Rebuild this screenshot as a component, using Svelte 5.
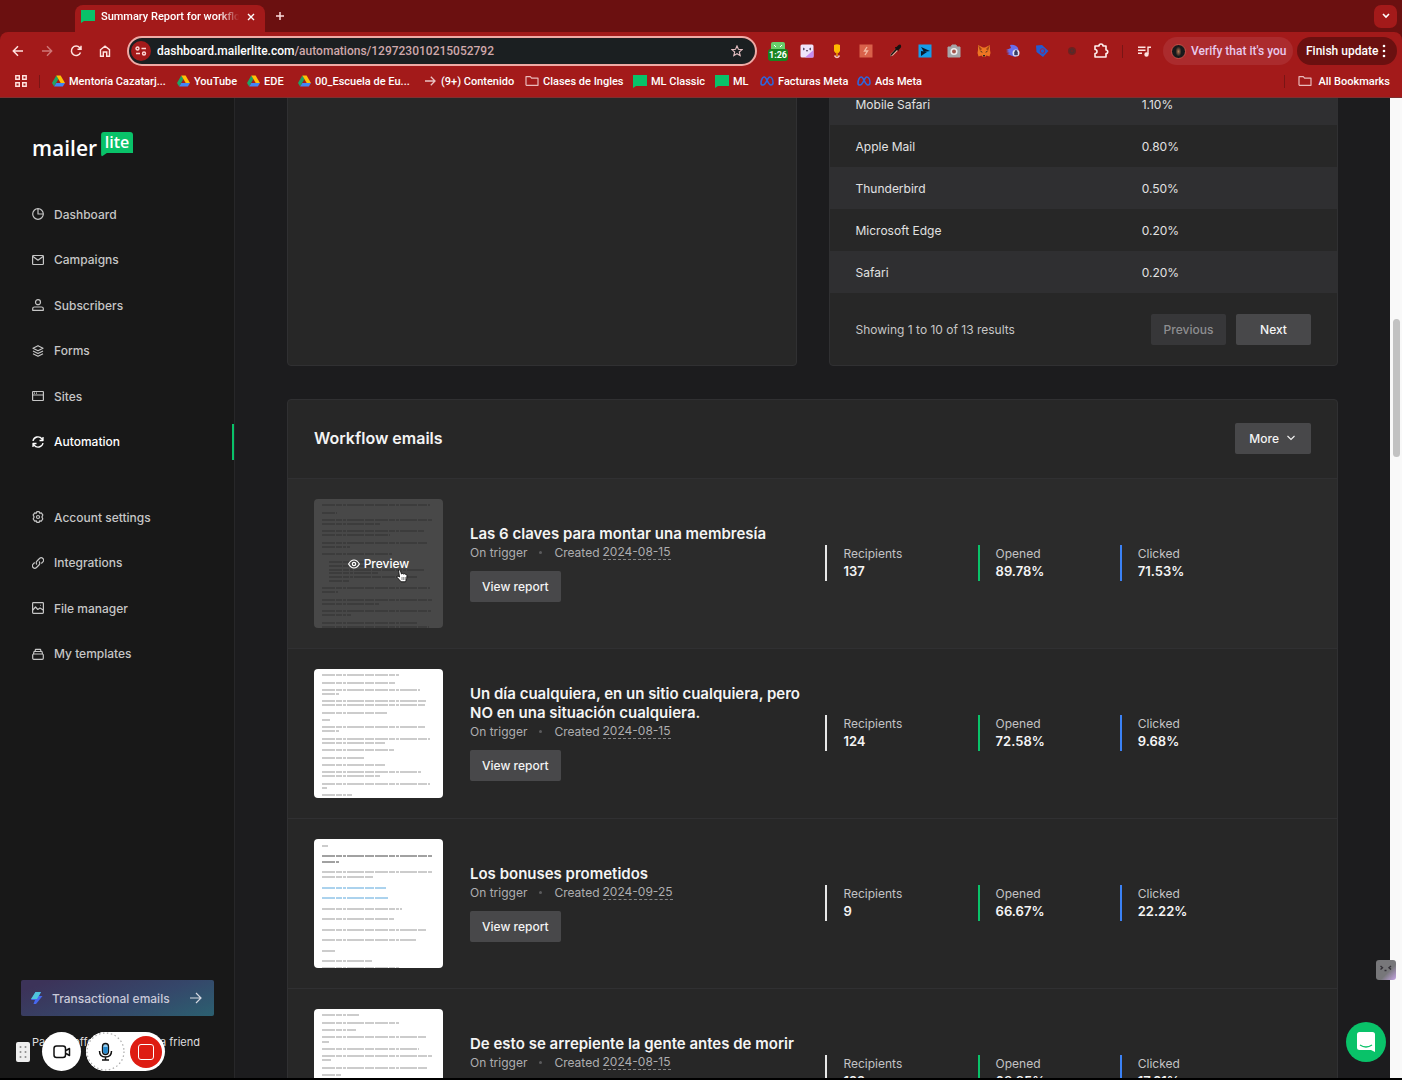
<script>
    const bookmarks = [
        { label: 'Mentoría Cazatarj...', icon: 'drive', width: 107 },
        { label: 'YouTube', icon: 'drive', width: 52 },
        { label: 'EDE', icon: 'drive', width: 33 },
        { label: '00_Escuela de Eu...', icon: 'drive', width: 108 },
        { label: '(9+) Contenido', icon: 'arrow', width: 83 },
        { label: 'Clases de Ingles', icon: 'folder', width: 90 },
        { label: 'ML Classic', icon: 'ml', width: 64 },
        { label: 'ML', icon: 'ml', width: 27 },
        { label: 'Facturas Meta', icon: 'meta', width: 79 },
        { label: 'Ads Meta', icon: 'meta', width: 62 }
    ];

    const extensions = ['timer', 'kawaii', 'spoon', 'bolt', 'dropper', 'play', 'camera', 'fox', 'sonic', 'tag', 'dot', 'puzzle'];

    const mainNav = ['Dashboard', 'Campaigns', 'Subscribers', 'Forms', 'Sites', 'Automation'];
    const moreNav = ['Account settings', 'Integrations', 'File manager', 'My templates'];

    const clients = [
        { name: 'Mobile Safari', share: '1.10%' },
        { name: 'Apple Mail', share: '0.80%' },
        { name: 'Thunderbird', share: '0.50%' },
        { name: 'Microsoft Edge', share: '0.20%' },
        { name: 'Safari', share: '0.20%' }
    ];

    // lines: [y, length, kind] of the email thumbnail
    const emails = [
        {
            title: 'Las 6 claves para montar una membresía',
            created: '2024-08-15',
            recipients: '137', opened: '89.78%', clicked: '71.53%',
            hovered: true,
            lines: [[5, 108], [13, 15], [20, 110], [24, 58], [31, 102], [35, 68], [43, 105], [47, 28], [54, 70], [62, 50, 'item'], [66, 60, 'item'], [70, 103, 'item'], [73, 56, 'item'], [77, 95, 'item'], [81, 28, 'item'], [88, 108], [92, 16], [100, 110], [104, 57], [111, 109], [115, 29], [123, 96], [127, 107]]
        },
        {
            title: 'Un día cualquiera, en un sitio cualquiera, pero NO en una situación cualquiera.',
            created: '2024-08-15',
            recipients: '124', opened: '72.58%', clicked: '9.68%',
            lines: [[5, 78], [13, 74], [20, 98], [24, 17], [31, 104], [35, 103], [43, 65], [50, 8], [57, 103], [61, 17], [69, 108], [73, 63], [80, 72], [88, 42], [95, 63], [102, 99], [106, 58], [114, 108], [118, 5], [125, 30]]
        },
        {
            title: 'Los bonuses prometidos',
            created: '2024-09-25',
            recipients: '9', opened: '66.67%', clicked: '22.22%',
            lines: [[6, 6], [16, 110, 'bold'], [22, 17, 'bold'], [32, 110], [37, 51], [48, 64, 'link'], [58, 67, 'link'], [69, 80], [79, 72], [90, 104], [100, 94], [111, 13], [121, 50], [128, 78]]
        },
        {
            title: 'De esto se arrepiente la gente antes de morir',
            created: '2024-08-15',
            recipients: '122', opened: '68.85%', clicked: '17.21%',
            lines: [[5, 37], [13, 78], [20, 34], [27, 104], [32, 7], [39, 97], [46, 110], [50, 9], [58, 106], [65, 19], [73, 98], [80, 60], [88, 104], [96, 40]]
        }
    ];
</script>

{#snippet bookmarkIcon(name)}
    {#if name === 'drive'}
        <svg width="13" height="12" viewBox="0 0 13 12">
            <path d="M4.3 0.5 0 8l2.1 3.5L6.5 4z" fill="#1fa463" />
            <path d="M4.3 0.5h4.3L13 8H8.7z" fill="#ffc107" />
            <path d="M2.1 11.5 4.3 8H13l-2.2 3.5z" fill="#4285f4" />
        </svg>
    {:else if name === 'arrow'}
        <svg width="13" height="12" viewBox="0 0 13 12" fill="none" stroke="#eac4c4" stroke-width="1.3">
            <path d="M1 6h10M6.8 1.8 11 6l-4.2 4.2" />
        </svg>
    {:else if name === 'folder'}
        <svg width="14" height="12" viewBox="0 0 14 12" fill="none" stroke="#e9baba" stroke-width="1.2">
            <path d="M1 9.8V1.7h4.3l1.3 1.5H13v7.1H1.5z" stroke-linejoin="round" />
        </svg>
    {:else if name === 'ml'}
        <svg width="14" height="13" viewBox="0 0 14 13"><path d="M0 0h14v11H3l-3 2z" fill="#09c269" /></svg>
    {:else}
        <svg width="14" height="10" viewBox="0 0 14 10" fill="none" stroke="#2f66dc" stroke-width="1.6">
            <path d="M1 7.4C1 4 2.5 1 4.3 1 6.6 1 8 9 10.8 9 12.5 9 13 8 13 6.8 13 3.5 11.5 1 9.7 1 7.5 1 6 9 3 9 1.7 9 1 8.5 1 7.4z" />
        </svg>
    {/if}
{/snippet}

{#snippet extensionIcon(name)}
    <svg width="20" height="20" viewBox="0 0 20 20">
        {#if name === 'timer'}
            <rect x="3" y="1" width="14" height="9" rx="2" fill="#69ce6b" />
            <path d="m6 4 2 2m6-2-2 2" stroke="#fff" />
            <rect x="0" y="8" width="20" height="12" rx="3" fill="#18841f" />
            <text x="10" y="17" text-anchor="middle" class="timer-text">1:26</text>
        {:else if name === 'kawaii'}
            <rect x="3.5" y="3.5" width="13" height="13" rx="1.5" fill="#eee3fa" />
            <path d="M16.5 9v7.5H8z" fill="#c68cf0" />
            <path d="m6 7 1.5 1L6 9m8-2-1.5 1L14 9M9 9.5q1 1 2 0" fill="none" stroke="#41304d" stroke-width="1" />
        {:else if name === 'spoon'}
            <path d="M7 4q3-1.500 6 0V10l-1.500 2h-3L7 10z" fill="#ffb800" />
            <path d="M10 11v4" stroke="#f4a300" stroke-width="1.5" />
            <path d="M7.5 14.5q2.500 4 5 0" fill="none" stroke="#f3c3bb" stroke-width="1.5" />
        {:else if name === 'bolt'}
            <rect x="3.5" y="3.5" width="13" height="13" fill="#d9614a" />
            <path d="m11 6-2.500 4h3l-2.500 4" fill="none" stroke="#f3b8a2" stroke-width="1.4" />
        {:else if name === 'dropper'}
            <path d="m5 15.5 1-3 5-5 2 2-5 5z" fill="#f0b7a5" />
            <path d="m10 6 1.5 0 2-2q2-1 2.5.5t-.5 2.5l-2 2v1.5L12 9l-5 5-2 2 1-3 4.5-5z" fill="#16110f" />
        {:else if name === 'play'}
            <rect x="3.5" y="3.5" width="13" height="13" fill="#159de9" />
            <path d="m6 6 9 4-6 1zM6 10l6 1-6 4z" fill="#091a2c" />
        {:else if name === 'camera'}
            <path d="M4 6h3l1-2h4l1 2h3v10H4z" fill="#a5a5a8" stroke="#a5a5a8" stroke-linejoin="round" />
            <circle cx="10" cy="10.5" r="3.5" fill="#eee" />
            <circle cx="10" cy="10.5" r="2" fill="#a4554c" />
        {:else if name === 'fox'}
            <path d="m4 4 5 2.500h2L16 4l0 5 .5 3-1 3.500-3-1L11 16H9l-1.500-1.500-3 1-1-3.500.5-3z" fill="#ee7623" />
            <path d="m4 4 4 4-2 2zm12 0-4 4 2 2z" fill="#a34515" />
            <path d="m6 10 2 .5.5 1.500zm8 0-2 .5-.5 1.500zM9 14h2v1.500H9z" fill="#282323" />
        {:else if name === 'sonic'}
            <path d="M3 9 8 7 7 4q5-1 8 3l1 5-4 4-8-3 3-1-4-1 3-1z" fill="#696eea" />
            <circle cx="13" cy="12" r="3.5" fill="#e2e5f6" />
            <path d="M11.500 11h3v3h-3zM12 11v-1.500h2V11" fill="#383d63" stroke="#383d63" stroke-width=".5" />
        {:else if name === 'tag'}
            <path d="M4 4.500 10 4l6.500 6-5.500 6-6.500-5z" fill="#235bd2" />
            <circle cx="10.5" cy="10" r="2.3" fill="none" stroke="#a9213f" />
        {:else if name === 'dot'}
            <circle cx="10" cy="10" r="4" fill="#6e2220" />
            <circle cx="10" cy="10" r="2" fill="none" stroke="#4b3030" />
        {:else}
            <path d="M4 5h4a2 2 0 0 1 4 0h3v4a1.7 1.7 0 0 1 0 3.500V16H4v-3.500a2 2 0 0 0 0-4z" fill="none" stroke="#fff0ee" stroke-width="1.6" stroke-linejoin="round" />
        {/if}
    </svg>
{/snippet}

{#snippet navIcon(name)}
    <svg width="12" height="12" viewBox="0 0 12 12" fill="none" stroke="currentColor" stroke-width="1.2" stroke-linejoin="round">
        {#if name === 'Dashboard'}
            <circle cx="6" cy="6" r="5.3" /><path d="M6 .7V6h5.300" />
        {:else if name === 'Campaigns'}
            <rect x=".6" y="1.5" width="10.8" height="9" rx=".8" /><path d="m1 2.500 5 3.700 5-3.700" />
        {:else if name === 'Subscribers'}
            <circle cx="6" cy="3.2" r="2.5" /><path d="M.7 11.300V9.500Q.7 8 2.500 8h7q1.800 0 1.800 1.500v1.800z" />
        {:else if name === 'Forms'}
            <path d="m6 .7 5 2.500-5 2.500-5-2.500zM1 6l5 2.500L11 6M1 8.700l5 2.500 5-2.500" />
        {:else if name === 'Sites'}
            <rect x=".6" y="1.5" width="10.8" height="9" rx=".5" /><path d="M.6 5h10.800M2 3.200h1M4 3.200h1" />
        {:else if name === 'Automation'}
            <path d="M1 5a5 5 0 0 1 9-2l1 1.500M11 1v3.500H7.500M11 7a5 5 0 0 1-9 2L1 7.500M1 11V7.500h3.500" stroke-width="1.3" />
        {:else if name === 'Account settings'}
            <path d="M4.800.7h2.400l.5 1.500 1.600-.3 1.500 2L9.900 6l.9 2-1.500 2.100-1.600-.3-.5 1.500H4.800l-.5-1.500-1.600.3L1.200 8l.9-2-.9-2.100 1.500-2 1.600.3z" /><circle cx="6" cy="6" r="1.5" />
        {:else if name === 'Integrations'}
            <path d="M5 7.500a2.400 2.400 0 0 1 0-3.500L7.500 1.500a2.400 2.400 0 0 1 3.400 3.400L9.300 6.500M7 4.500A2.400 2.400 0 0 1 7 8l-2.500 2.500a2.400 2.400 0 0 1-3.400-3.400l1.600-1.600" />
        {:else if name === 'File manager'}
            <rect x=".6" y=".6" width="10.8" height="10.8" rx=".8" /><path d="m.8 8 2.700-3 2.300 2.500L8 6l3.200 2M8 3.300h.6" />
        {:else}
            <rect x=".7" y="6" width="10.6" height="5.3" rx="1" /><path d="m1.500 6 .5-2.500h8l.5 2.500M3 3.300l.5-2h5l.5 2" />
        {/if}
    </svg>
{/snippet}

<div class="browser">
    <header class="chrome">
        <div class="tab-strip">
            <div class="tab">
                <svg width="14" height="13" viewBox="0 0 14 13"><path d="M0 0h14v11H3l-3 2z" fill="#09c269" /></svg>
                <span class="tab-title">Summary Report for workflow</span>
                <button type="button" class="icon-button small" aria-label="Close tab">
                    <svg width="8" height="8" viewBox="0 0 8 8" stroke="#fff" stroke-width="1.4"><path d="m1 1 6 6M7 1 1 7" /></svg>
                </button>
            </div>
            <button type="button" class="icon-button new-tab" aria-label="New tab">
                <svg width="10" height="10" viewBox="0 0 10 10" stroke="#fbdcdc" stroke-width="1.5"><path d="M5 1v8M1 5h8" /></svg>
            </button>
            <button type="button" class="icon-button tab-search" aria-label="Search tabs">
                <svg width="8" height="6" viewBox="0 0 8 6" fill="none" stroke="#fff" stroke-width="1.6"><path d="m1 1 3 3 3-3" /></svg>
            </button>
        </div>

        <div class="toolbar">
            <div class="nav-buttons">
                <button type="button" class="icon-button" aria-label="Back">
                    <svg width="12" height="12" viewBox="0 0 12 12" fill="none" stroke="#ffe3e0" stroke-width="1.5"><path d="M11 6H1.500M6 1.300 1.300 6 6 10.700" /></svg>
                </button>
                <button type="button" class="icon-button" aria-label="Forward" disabled>
                    <svg width="12" height="12" viewBox="0 0 12 12" fill="none" stroke="#cf7777" stroke-width="1.4"><path d="M1 6h9.500M6 1.300 10.700 6 6 10.700" /></svg>
                </button>
                <button type="button" class="icon-button" aria-label="Reload">
                    <svg width="12" height="12" viewBox="0 0 12 12" fill="none" stroke="#ffe3e0" stroke-width="1.5"><path d="M10.500 7.500a4.700 4.700 0 1 1-.8-4.800L11 4M11 .8V4.300H7.500" /></svg>
                </button>
                <button type="button" class="icon-button" aria-label="Home">
                    <svg width="12" height="12" viewBox="0 0 12 12" fill="none" stroke="#ffe3e0" stroke-width="1.4"><path d="M1.500 4.700 6 1.200l4.500 3.500v6.500H7.700V7H4.300v4.200H1.500z" /></svg>
                </button>
            </div>

            <div class="address">
                <button type="button" class="icon-button site-info" aria-label="Site information">
                    <svg width="12" height="10" viewBox="0 0 12 10" fill="none" stroke="#ffd8d5" stroke-width="1.4"><circle cx="2.5" cy="2.5" r="1.5" /><path d="M6.500 2.500H11M1 7.500h4" /><circle cx="9" cy="7.5" r="1.5" /></svg>
                </button>
                <span class="url">dashboard.mailerlite.com<span class="path">/automations/129723010215052792</span></span>
                <button type="button" class="icon-button" aria-label="Bookmark this tab">
                    <svg width="12" height="12" viewBox="0 0 12 12" fill="none" stroke="#e5bfc2" stroke-width="1.1"><path d="m6 .9 1.400 3.400 3.700.3-2.800 2.400.9 3.600L6 8.700l-3.200 1.900.9-3.600L.9 4.600l3.700-.3z" /></svg>
                </button>
            </div>

            <div class="extensions">
                {#each extensions as name}
                    <button type="button" class="icon-button" aria-label={name}>{@render extensionIcon(name)}</button>
                {/each}
            </div>
            <span class="divider"></span>
            <button type="button" class="icon-button" aria-label="Media controls">
                <svg width="13" height="11" viewBox="0 0 13 11" fill="none" stroke="#ffe3e0" stroke-width="1.4"><path d="M0 1.200h7.500M0 4.200h7.500M0 7.200h4M10 8V1.200h3" /><circle cx="8.5" cy="8.5" r="1.5" fill="#ffe3e0" /></svg>
            </button>
            <button type="button" class="verify"><span class="avatar"></span>Verify that it's you</button>
            <button type="button" class="finish">Finish update
                <svg width="4" height="14" viewBox="0 0 4 14" fill="#fff"><circle cx="2" cy="2" r="1.3" /><circle cx="2" cy="7" r="1.3" /><circle cx="2" cy="12" r="1.3" /></svg>
            </button>
        </div>

        <nav class="bookmarks">
            <button type="button" class="icon-button small" aria-label="Apps">
                <svg width="12" height="12" viewBox="0 0 12 12" fill="none" stroke="#ffe3e0" stroke-width="1.4"><path d="M.8.8h3.500v3.500H.8zM7.700.8h3.500v3.500H7.700zM.8 7.700h3.500v3.500H.8zM7.700 7.700h3.500v3.500H7.700z" /></svg>
            </button>
            <span class="divider"></span>
            {#each bookmarks as bookmark}
                <a href="#bookmark" style:width="{bookmark.width}px">{@render bookmarkIcon(bookmark.icon)}{bookmark.label}</a>
            {/each}
            <span class="divider last"></span>
            <a href="#all">{@render bookmarkIcon('folder')}All Bookmarks</a>
        </nav>
    </header>

    <div class="page">
        <aside class="sidebar">
            <a href="#home" class="logo" aria-label="MailerLite">
                <span class="mailer">mailer</span>
                <span class="lite">lite</span>
            </a>
            <nav class="menu">
                {#each mainNav as item}
                    <a href="#{item}" class:active={item === 'Automation'}>{@render navIcon(item)}{item}</a>
                {/each}
            </nav>
            <nav class="menu secondary">
                {#each moreNav as item}
                    <a href="#{item}">{@render navIcon(item)}{item}</a>
                {/each}
            </nav>
            <div class="sidebar-bottom">
                <a href="#transactional" class="transactional">
                    <svg width="12" height="12" viewBox="0 0 12 12"><path d="M4.500 0H10L8 4h3.500L5 12H2.500L4 8H0z" fill="#4668f0" /><path d="M4.500 0H10L6 7H0z" fill="#4fc4dc" /></svg>
                    <span>Transactional emails</span>
                    <svg width="12" height="12" viewBox="0 0 12 12" fill="none" stroke="#d6d9e2" stroke-width="1.2"><path d="M0 6h11M6 1l5 5-5 5" /></svg>
                </a>
                <div class="small-links">
                    <a href="#partner">Partner offer</a>
                    <a href="#refer">Refer a friend</a>
                </div>
            </div>
        </aside>

        <main>
            <div class="reports">
                <section class="card"></section>
                <section class="card">
                    <table>
                        <tbody>
                            {#each clients as client}
                                <tr>
                                    <td>{client.name}</td>
                                    <td>{client.share}</td>
                                </tr>
                            {/each}
                        </tbody>
                    </table>
                    <div class="pagination">
                        <span>Showing 1 to 10 of 13 results</span>
                        <button type="button" class="button" disabled>Previous</button>
                        <button type="button" class="button">Next</button>
                    </div>
                </section>
            </div>

            <section class="card workflow">
                <div class="workflow-header">
                    <h2>Workflow emails</h2>
                    <button type="button" class="button more">More
                        <svg width="8" height="6" viewBox="0 0 8 6" fill="none" stroke="currentColor" stroke-width="1.1"><path d="m.5 1 3.500 3.500L7.500 1" /></svg>
                    </button>
                </div>
                {#each emails as email}
                    <article class="email" class:hovered={email.hovered}>
                        <div class="thumb">
                            <svg width="129" height="129" viewBox="0 0 129 129">
                                {#each email.lines as [y, length, kind]}
                                    <line class={kind} x1={kind === 'item' ? 15 : 8} x2={8 + length} y1={y + 1} y2={y + 1} />
                                {/each}
                            </svg>
                            {#if email.hovered}
                                <button type="button" class="preview">
                                    <svg width="12" height="10" viewBox="0 0 12 10" fill="none" stroke="currentColor" stroke-width="1.2"><path d="M.6 5Q3 1 6 1t5.400 4Q9 9 6 9T.6 5z" /><circle cx="6" cy="5" r="1.7" /></svg>
                                    Preview
                                </button>
                                <svg class="cursor" width="12" height="14" viewBox="0 0 12 14"><path d="M2.500 1Q4 .3 4.500 2L5.500 5q1-1 2 0 1-.7 1.800.3 1.700-.3 1.700 1.500 0 3-1.500 6H5Q3 10 1 8.500.6 7 2 7l1.500 1z" fill="#fff" stroke="#111" stroke-width=".9" /><path d="M6 8v3M7.700 8v3M9.300 8v3" stroke="#333" stroke-width=".6" /></svg>
                            {/if}
                        </div>
                        <div class="details">
                            <h3>{email.title}</h3>
                            <p>On trigger <i></i> Created <span class="date">{email.created}</span></p>
                            <button type="button" class="button">View report</button>
                        </div>
                        <dl>
                            <div><dt>Recipients</dt><dd>{email.recipients}</dd></div>
                            <div class="opened"><dt>Opened</dt><dd>{email.opened}</dd></div>
                            <div class="clicked"><dt>Clicked</dt><dd>{email.clicked}</dd></div>
                        </dl>
                    </article>
                {/each}
            </section>
        </main>
        <div class="scrollbar"><span></span></div>
    </div>

    <!-- Screen recorder controls -->
    <div class="recorder">
        <span class="handle">
            <svg width="8" height="14" viewBox="0 0 8 14" fill="#8c8c8c"><circle cx="1.5" cy="2" r="1" /><circle cx="6.5" cy="2" r="1" /><circle cx="1.5" cy="7" r="1" /><circle cx="6.5" cy="7" r="1" /><circle cx="1.5" cy="12" r="1" /><circle cx="6.5" cy="12" r="1" /></svg>
        </span>
        <button type="button" class="round" aria-label="Camera">
            <svg width="18" height="14" viewBox="0 0 18 14" fill="none" stroke="#111" stroke-width="1.5"><rect x="1" y="1" width="11.5" height="11.5" rx="2.5" /><path d="m13 5.500 3.500-2v7l-3.500-2" stroke-linejoin="round" /></svg>
        </button>
        <div class="pill">
            <button type="button" class="round mic" aria-label="Microphone">
                <svg width="39" height="39" viewBox="0 0 39 39" fill="none">
                    <circle cx="19.5" cy="19.5" r="18.5" stroke="#aaa" stroke-width="1.2" stroke-dasharray="1.5 2.5" />
                    <rect x="16.5" y="11.5" width="6" height="11" rx="3" fill="#8fc9ed" stroke="#111" stroke-width="1.3" />
                    <path d="M17.200 15h4.600v5q-2 3-4.600 0z" fill="#2588cc" />
                    <path d="M13.500 19q0 6 6 6t6-6M19.500 25v3M16 28h7" stroke="#111" stroke-width="1.5" />
                </svg>
            </button>
            <button type="button" class="stop" aria-label="Stop recording"><span></span></button>
        </div>
    </div>

    <span class="assistant">
        <svg width="14" height="8" viewBox="0 0 14 8" fill="none" stroke="#343138" stroke-width="1.4"><path d="m1.500 1 2 1.800-2 1.700M12 1l-2 1.800 2 1.700M5.500 5.500h2" /></svg>
    </span>
    <button type="button" class="chat" aria-label="Open chat">
        <svg width="18" height="20" viewBox="0 0 18 20"><path d="M2.500 0h13Q18 0 18 2.500V20l-4-2H2.500Q0 18 0 15.500v-13Q0 0 2.500 0z" fill="#fff" /><path d="M3 13q6 4 12 0" fill="none" stroke="#09c269" stroke-width="1.3" /></svg>
    </button>
</div>

<style>
    :global(body) {
        margin: 0;
        background: #000;
    }

    .browser {
        position: relative;
        display: flex;
        flex-direction: column;
        height: 100vh;
        box-sizing: border-box;
        border-bottom: 2px solid #000;
        overflow: hidden;
        font-family: Inter, "Liberation Sans", sans-serif;
        font-size: 12px;
        color: #e2e2e2;
    }

    .browser * {
        box-sizing: border-box;
    }

    button {
        font: inherit;
        color: inherit;
        border: 0;
        padding: 0;
        background: none;
    }

    a {
        color: inherit;
        text-decoration: none;
    }

    svg {
        flex: none;
        display: block;
    }

    /* Browser window */
    .chrome {
        flex: none;
        height: 98px;
        background: #6b1010;
        color: #fff;
        font-family: Roboto, "Liberation Sans", sans-serif;
        font-size: 11px;
        font-weight: 500;
        border-bottom: 1px solid #7d3030;
    }

    .tab-strip {
        display: flex;
        align-items: center;
        height: 32px;
        padding: 0 5px 0 75px;
    }

    .tab {
        display: flex;
        align-items: center;
        align-self: flex-end;
        width: 190px;
        height: 27px;
        padding: 0 8px 4px 6px;
        background: #a31a1a;
        border-radius: 8px 8px 0 0;
    }

    .tab-title {
        flex: 1;
        margin-left: 6px;
        overflow: hidden;
        white-space: nowrap;
        mask-image: linear-gradient(to right, #000 82%, transparent 96%);
    }

    .icon-button {
        display: flex;
        flex: none;
        align-items: center;
        justify-content: center;
        width: 24px;
        height: 24px;
    }

    .icon-button.small {
        width: 12px;
    }

    .new-tab {
        margin-left: 3px;
    }

    .tab-search {
        width: 23px;
        height: 23px;
        margin-left: auto;
        border-radius: 7px;
        background: #a31a1a;
    }

    .toolbar {
        display: flex;
        align-items: center;
        height: 38px;
        padding: 0 5px 0 6px;
        background: #a31a1a;
        border-radius: 8px 8px 0 0;
    }

    .nav-buttons {
        display: flex;
        gap: 5px;
    }

    .address {
        flex: 1;
        display: flex;
        align-items: center;
        min-width: 0;
        height: 30px;
        margin: 0 9px 0 10px;
        padding: 0 6px 0 2px;
        border: 2px solid #efaaa5;
        border-radius: 15px;
        background: #1b1f21;
    }

    .site-info {
        width: 20px;
        height: 20px;
        border-radius: 50%;
        background: #a31a1a;
    }

    .url {
        flex: 1;
        margin-left: 6px;
        overflow: hidden;
        white-space: nowrap;
        font-size: 12px;
    }

    .path {
        color: #cfa8ab;
    }

    .extensions {
        display: flex;
        justify-content: space-between;
        width: 347px;
    }

    .timer-text {
        font-size: 9px;
        font-weight: 700;
        fill: #fff;
    }

    .divider {
        width: 1px;
        height: 13px;
        margin: 0 9px;
        background: #7a1515;
    }

    .verify,
    .finish {
        display: flex;
        align-items: center;
        height: 28px;
        border-radius: 14px;
        white-space: nowrap;
        font-size: 12px;
    }

    .verify {
        width: 130px;
        margin: 0 4px 0 7px;
        padding-left: 8px;
        gap: 5px;
        background: #ab2b2d;
        color: #e8c9ec;
    }

    .avatar {
        width: 15px;
        height: 15px;
        border: 1px solid #bf5147;
        border-radius: 50%;
        background: radial-gradient(ellipse 3px 5px, #b77a55, #17191b);
    }

    .finish {
        justify-content: space-between;
        width: 100px;
        padding: 0 11px 0 9px;
        background: #6b1010;
    }

    .bookmarks {
        display: flex;
        align-items: center;
        height: 27px;
        padding: 0 12px 5px 15px;
        background: #a31a1a;
    }

    .bookmarks .divider {
        margin: 0 12px;
    }

    .bookmarks .divider.last {
        margin: 0 13px 0 auto;
    }

    .bookmarks a {
        display: flex;
        align-items: center;
        gap: 4px;
        margin-right: 18px;
        white-space: nowrap;
    }

    .bookmarks a:last-child {
        margin-right: 0;
        gap: 6px;
    }

    /* Application */
    .page {
        flex: 1;
        display: flex;
        min-height: 0;
        background: #1c1c1e;
    }

    .sidebar {
        flex: none;
        display: flex;
        flex-direction: column;
        width: 235px;
        border-right: 1px solid #272729;
        background: #181818;
        color: #c6c6c6;
        font-weight: 500;
    }

    .logo {
        display: flex;
        gap: 4px;
        height: 40px;
        margin: 34px 0 24px 32px;
        color: #fff;
        font-family: "Open Sans", sans-serif;
    }

    .mailer {
        font-size: 21px;
        line-height: 32px;
        font-weight: 600;
    }

    .lite {
        align-self: flex-start;
        width: 32px;
        height: 25px;
        background: #09c269;
        border-radius: 3px;
        clip-path: polygon(0 0, 100% 0, 100% 84%, 18% 84%, 0 100%);
        font-size: 16px;
        line-height: 20px;
        font-weight: 600;
        text-align: center;
    }

    .menu {
        display: flex;
        flex-direction: column;
        justify-content: space-between;
        height: 264px;
    }

    .menu.secondary {
        height: 173px;
        margin-top: 39px;
    }

    .menu a {
        display: flex;
        align-items: center;
        gap: 10px;
        height: 36px;
        padding-left: 32px;
    }

    .menu a.active {
        color: #fff;
        border-right: 2px solid #09c269;
    }

    .sidebar-bottom {
        margin-top: auto;
        padding: 0 20px 28px 21px;
    }

    .transactional {
        display: flex;
        align-items: center;
        gap: 9px;
        height: 36px;
        padding: 0 12px 0 10px;
        border-radius: 2px;
        background: linear-gradient(160deg, #3c3359 10%, #35476a 60%, #2b6070);
        color: #c9c9d8;
    }

    .transactional span {
        flex: 1;
    }

    .small-links {
        display: flex;
        justify-content: space-between;
        margin: 19px 14px 0 11px;
        font-size: 11px;
        line-height: 15px;
        font-weight: 400;
        color: #dedede;
    }

    main {
        flex: 1;
        min-width: 0;
        padding: 0 52px;
        overflow: hidden;
    }

    .card {
        border: 1px solid #303032;
        border-radius: 4px;
        background: #272727;
    }

    .reports {
        display: grid;
        grid-template-columns: 1fr 1fr;
        gap: 32px;
        margin: -16px 0 33px;
    }

    table {
        width: 100%;
        border-collapse: collapse;
    }

    td {
        width: 56%;
        height: 42px;
        padding: 0 0 0 26px;
    }

    td + td {
        width: 44%;
        padding-left: 28px;
    }

    tr:nth-child(odd) {
        background: #2f2f31;
    }

    .pagination {
        display: flex;
        align-items: center;
        gap: 10px;
        height: 72px;
        padding: 0 26px;
        color: #c6c6c6;
    }

    .pagination span {
        flex: 1;
    }

    .pagination .button {
        width: 75px;
        padding: 0;
    }

    .button {
        height: 31px;
        padding: 0 12px;
        border-radius: 2px;
        background: #48484a;
        color: #f4f4f4;
        font-size: 12px;
        font-weight: 500;
    }

    .button:disabled {
        background: #373739;
        color: #8e8e90;
    }

    .workflow-header {
        display: flex;
        align-items: center;
        justify-content: space-between;
        height: 78px;
        padding: 0 26px 2px;
    }

    h2 {
        margin: 0;
        font-size: 16px;
        line-height: 20px;
        font-weight: 600;
        color: #f4f4f4;
    }

    .more {
        display: flex;
        align-items: center;
        gap: 8px;
        padding: 0 16px 0 14px;
    }

    .email {
        display: grid;
        grid-template-columns: 129px minmax(0, 382fr) minmax(0, 485fr);
        align-items: center;
        height: 170px;
        padding: 0 26px;
        border-top: 1px solid #303032;
    }

    .hovered {
        background: #2b2b2b;
    }

    .thumb {
        position: relative;
        height: 129px;
        border-radius: 4px;
        background: #fff;
    }

    .thumb line {
        stroke: #999;
        stroke-width: 1;
        stroke-dasharray: 13 1 6 1 3 1 17 1 9 1;
    }

    .thumb .bold {
        stroke: #444;
    }

    .thumb .link {
        stroke: #58a6dc;
    }

    .hovered .thumb {
        background: #484848;
    }

    .hovered .thumb line {
        stroke: #303030;
    }

    .preview {
        position: absolute;
        inset: 0;
        display: flex;
        align-items: center;
        justify-content: center;
        gap: 4px;
        width: 100%;
        color: #fff;
        font-weight: 500;
    }

    .cursor {
        position: absolute;
        left: 82px;
        top: 70px;
    }

    .details {
        padding: 0 12px 2px 27px;
    }

    h3 {
        margin: 0;
        font-size: 15px;
        line-height: 19px;
        font-weight: 600;
        color: #f4f4f4;
    }

    .details p {
        display: flex;
        align-items: center;
        margin: 0 0 9px;
        line-height: 19px;
        color: #aeaeb0;
    }

    .details i {
        width: 3px;
        height: 3px;
        margin: 0 12px;
        border-radius: 50%;
        background: #5b5b5d;
    }

    .date {
        margin-left: 3px;
        line-height: 14px;
        border-bottom: 1px dashed #858587;
    }

    dl {
        display: grid;
        grid-template-columns: 152fr 142fr 191fr;
        margin: 0;
        padding-bottom: 2px;
    }

    dl div {
        height: 36px;
        padding-left: 16px;
        border-left: 2px solid #e8e8e8;
        line-height: 18px;
    }

    dl .opened {
        border-color: #09c269;
    }

    dl .clicked {
        border-color: #3b82f6;
    }

    dt {
        line-height: 17px;
        color: #c3c3c5;
    }

    dd {
        margin: 0;
        font-size: 13px;
        font-weight: 600;
        color: #f4f4f4;
    }

    .scrollbar {
        flex: none;
        width: 12px;
        padding: 221px 2px 0 3px;
        background: #f9f9f9;
    }

    .scrollbar span {
        display: block;
        height: 138px;
        border-radius: 4px;
        background: #c2c2c2;
    }

    /* Floating over the page */
    .recorder {
        position: absolute;
        left: 16px;
        bottom: 7px;
        display: flex;
        align-items: center;
    }

    .handle {
        display: flex;
        align-items: center;
        justify-content: center;
        width: 14px;
        height: 20px;
        border-radius: 2px;
        background: #eee;
    }

    .round {
        display: flex;
        align-items: center;
        justify-content: center;
        width: 39px;
        height: 39px;
        margin: 0 5px 0 12px;
        border-radius: 50%;
        background: #fff;
    }

    .round.mic {
        margin: 0;
    }

    .pill {
        display: flex;
        align-items: center;
        justify-content: space-between;
        width: 79px;
        padding-right: 3px;
        border-radius: 20px;
        background: #fff;
    }

    .stop {
        display: flex;
        align-items: center;
        justify-content: center;
        width: 32px;
        height: 32px;
        border-radius: 50%;
        background: #de1c12;
    }

    .stop span {
        width: 16px;
        height: 16px;
        border: 1px solid #fff;
        border-radius: 3px;
    }

    .assistant {
        position: absolute;
        right: 6px;
        bottom: 98px;
        display: flex;
        justify-content: center;
        width: 20px;
        height: 20px;
        padding-top: 5px;
        border-radius: 3px;
        background: linear-gradient(135deg, #77777a 60%, #c6a5e6);
    }

    .chat {
        position: absolute;
        right: 16px;
        bottom: 16px;
        display: flex;
        align-items: center;
        justify-content: center;
        width: 40px;
        height: 40px;
        border-radius: 50%;
        background: #09c269;
    }
</style>
